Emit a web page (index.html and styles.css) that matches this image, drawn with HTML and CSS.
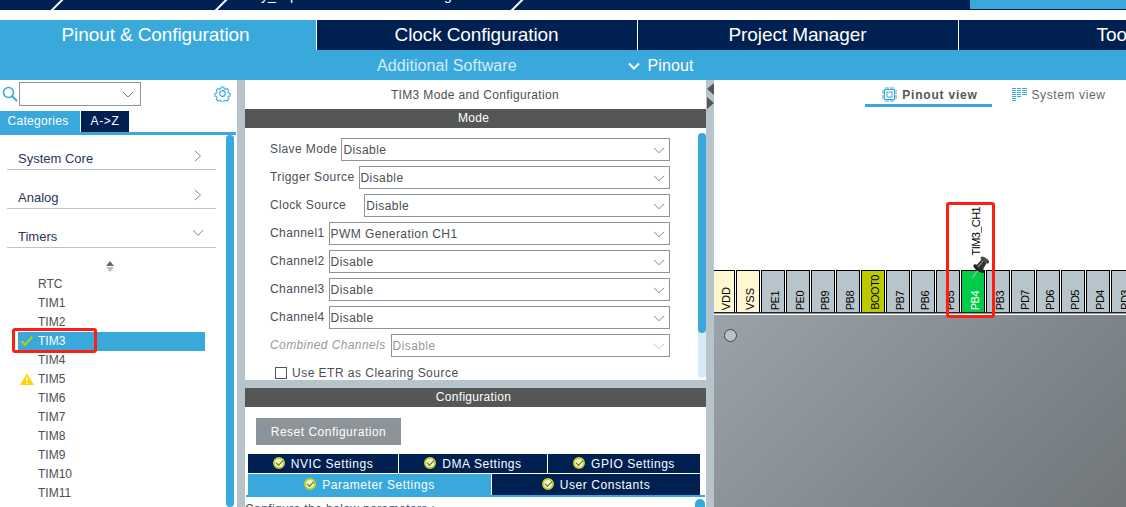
FILE: index.html
```html
<!DOCTYPE html>
<html lang="en">

<head>
    <meta charset="UTF-8" />
    <title>TIM3 Pinout</title>
    <link rel="stylesheet" href="styles.css">
</head>

<body>
    <div class="crumbs">
        <i class="crumb-cut"></i>
        <i class="crumb-cut"></i>
        <i class="crumb-cut"></i>
        <span class="crumb-text name">y_</span>
        <span class="crumb-text ext">p</span>
        <span class="crumb-text tail">g</span>
        <span class="crumb-end"></span>
    </div>

    <div class="main-tabs">
        <div class="main-tab active">Pinout &amp; Configuration</div>
        <div class="main-tab">Clock Configuration</div>
        <div class="main-tab">Project Manager</div>
        <div class="main-tab">Tools</div>
    </div>
    <div class="sub-bar">
        <span class="sub-item dim">Additional Software</span>
        <span class="sub-item">
            <svg width="12" height="8" viewBox="0 0 12 8"><path d="M1 1.500l5 5 5-5" fill="none" stroke="#fff" stroke-width="2"/></svg>
            Pinout
        </span>
    </div>

    <div class="workspace">
        <aside class="side">
            <div class="search-row">
                <svg width="16" height="16" viewBox="0 0 16 16"><circle cx="6.500" cy="6.500" r="5" fill="none" stroke="#39a9dc" stroke-width="1.600"/><path d="M10 10l5 5" stroke="#39a9dc" stroke-width="1.800"/></svg>
                <div class="combo">
                    <svg width="12" height="7" viewBox="0 0 12 7"><path d="M1 1l5 5 5-5" fill="none" stroke="#777" stroke-width="1"/></svg>
                </div>
                <svg class="gear" width="17" height="17" viewBox="0 0 17 17"><path d="M7 1h3l.4 2 1.500.7 1.800-1.100 2 2.100-1.100 1.700.6 1.500 2 .5v3l-2 .4-.6 1.500 1.100 1.800-2 2-1.800-1.100-1.500.6-.4 2H7l-.4-2-1.500-.6-1.800 1.100-2-2 1.100-1.800-.7-1.500-2-.4v-3l2-.5.7-1.500-1.100-1.700 2-2.100 1.800 1.100 1.500-.7z" transform="translate(1.100 1.100) scale(.87)" fill="none" stroke="#39a9dc" stroke-width="1.200"/><circle cx="8.500" cy="8.500" r="2.800" fill="none" stroke="#39a9dc" stroke-width="1.200"/></svg>
            </div>
            <div class="side-tabs">
                <div class="side-tab active">Categories</div>
                <div class="side-tab">A-&gt;Z</div>
            </div>
            <div class="side-body">
                <div class="side-tree">
                    <div class="group">System Core
                        <svg width="8" height="12" viewBox="0 0 8 12"><path d="M1 1l5.500 5-5.500 5" fill="none" stroke="#888"/></svg>
                    </div>
                    <div class="group">Analog
                        <svg width="8" height="12" viewBox="0 0 8 12"><path d="M1 1l5.500 5-5.500 5" fill="none" stroke="#888"/></svg>
                    </div>
                    <div class="group">Timers
                        <svg class="open" width="12" height="8" viewBox="0 0 12 8"><path d="M1 1l5 5.500 5-5.500" fill="none" stroke="#888"/></svg>
                    </div>
                    <div class="sort"><i class="sort-up"></i><i class="sort-down"></i></div>
                    <ul class="timer-list">
                        <li>RTC</li>
                        <li>TIM1</li>
                        <li>TIM2</li>
                        <li class="selected">
                            <svg class="mark" width="14" height="12" viewBox="0 0 14 12"><path d="M1.500 6l3.500 4 7.500-8.500" fill="none" stroke="#b5cc18" stroke-width="2"/></svg>
                            TIM3
                            <span class="red-box list-box"></span>
                        </li>
                        <li>TIM4</li>
                        <li>
                            <svg class="mark" width="14" height="12" viewBox="0 0 14 12"><path d="M7 .5L14 12H0z" fill="#ffd200"/><path d="M7 4v4.500M7 9.500v1.500" stroke="#fff" stroke-width="1.400"/></svg>
                            TIM5
                        </li>
                        <li>TIM6</li>
                        <li>TIM7</li>
                        <li>TIM8</li>
                        <li>TIM9</li>
                        <li>TIM10</li>
                        <li>TIM11</li>
                    </ul>
                </div>
                <div class="scroll side-scroll"><div class="thumb full"></div></div>
            </div>
        </aside>

        <section class="center">
            <div class="panel mode-panel">
                <div class="panel-title">TIM3 Mode and Configuration</div>
                <div class="band">Mode</div>
                <div class="mode-body">
                    <div class="form">
                        <div class="row"><label>Slave Mode</label><div class="select">Disable<svg width="12" height="7" viewBox="0 0 14 8"><path d="M1 1l6 5.500L13 1" fill="none" stroke="#777"/></svg></div></div>
                        <div class="row"><label>Trigger Source</label><div class="select">Disable<svg width="12" height="7" viewBox="0 0 14 8"><path d="M1 1l6 5.500L13 1" fill="none" stroke="#777"/></svg></div></div>
                        <div class="row"><label class="wide">Clock Source</label><div class="select">Disable<svg width="12" height="7" viewBox="0 0 14 8"><path d="M1 1l6 5.500L13 1" fill="none" stroke="#777"/></svg></div></div>
                        <div class="row"><label>Channel1</label><div class="select">PWM Generation CH1<svg width="12" height="7" viewBox="0 0 14 8"><path d="M1 1l6 5.500L13 1" fill="none" stroke="#777"/></svg></div></div>
                        <div class="row"><label>Channel2</label><div class="select">Disable<svg width="12" height="7" viewBox="0 0 14 8"><path d="M1 1l6 5.500L13 1" fill="none" stroke="#777"/></svg></div></div>
                        <div class="row"><label>Channel3</label><div class="select">Disable<svg width="12" height="7" viewBox="0 0 14 8"><path d="M1 1l6 5.500L13 1" fill="none" stroke="#777"/></svg></div></div>
                        <div class="row"><label>Channel4</label><div class="select">Disable<svg width="12" height="7" viewBox="0 0 14 8"><path d="M1 1l6 5.500L13 1" fill="none" stroke="#777"/></svg></div></div>
                        <div class="row off"><label>Combined Channels</label><div class="select">Disable<svg width="12" height="7" viewBox="0 0 14 8"><path d="M1 1l6 5.500L13 1" fill="none" stroke="#bbb"/></svg></div></div>
                        <div class="check-row"><i class="check"></i>Use ETR as Clearing Source</div>
                    </div>
                    <div class="scroll mode-scroll"><div class="thumb"></div></div>
                </div>
            </div>
            <div class="panel config-panel">
                <div class="band">Configuration</div>
                <button class="reset">Reset Configuration</button>
                <div class="cfg-tabs">
                    <div class="cfg-row">
                        <div class="cfg-tab nvic"><i class="ok"></i>NVIC Settings</div>
                        <div class="cfg-tab dma"><i class="ok"></i>DMA Settings</div>
                        <div class="cfg-tab gpio"><i class="ok"></i>GPIO Settings</div>
                    </div>
                    <div class="cfg-row tall">
                        <div class="cfg-tab param active"><i class="ok"></i>Parameter Settings</div>
                        <div class="cfg-tab user"><i class="ok"></i>User Constants</div>
                    </div>
                </div>
                <div class="cfg-line"></div>
                <div class="cfg-body">
                    <span class="cfg-note">Configure the below parameters :</span>
                    <div class="cfg-scroll"></div>
                </div>
            </div>
        </section>

        <div class="splitter"><i class="arrow-left"></i><i class="arrow-right"></i></div>

        <section class="pinout">
            <div class="view-tabs">
                <div class="view-tab active">
                    <svg width="15" height="15" viewBox="0 0 15 15"><rect x="2.500" y="2.500" width="10" height="10" fill="none" stroke="#39a9dc"/><rect x="5" y="5" width="5" height="5" fill="none" stroke="#39a9dc"/><path d="M4 0v2M6 0v2M9 0v2M11 0v2M4 13v2M6 13v2M9 13v2M11 13v2M0 4h2M0 6h2M0 9h2M0 11h2M13 4h2M13 6h2M13 9h2M13 11h2" stroke="#39a9dc"/></svg>
                    Pinout view
                </div>
                <div class="view-tab">
                    <svg width="15" height="14" viewBox="0 0 15 14"><path d="M0 .5h4M5 .5h4M10 .5h5M0 2.500h4M5 2.500h4M10 2.500h5M0 4.500h4M5 4.500h4M10 4.500h5M0 6.500h4M5 6.500h4M10 6.500h5M0 8.500h4M5 8.500h4M0 10.500h4M0 12.500h4" stroke="#39a9dc"/></svg>
                    System view
                </div>
            </div>
            <div class="pin-area">
                <div class="pins">
                    <div class="pin power vdd"><span>VDD</span></div>
                    <div class="pin power"><span>VSS</span></div>
                    <div class="pin"><span>PE1</span></div>
                    <div class="pin"><span>PE0</span></div>
                    <div class="pin"><span>PB9</span></div>
                    <div class="pin"><span>PB8</span></div>
                    <div class="pin boot"><span>BOOT0</span></div>
                    <div class="pin"><span>PB7</span></div>
                    <div class="pin"><span>PB6</span></div>
                    <div class="pin"><span>PB5</span></div>
                    <div class="pin used">
                        <span>PB4</span>
                        <b class="signal">TIM3_CH1</b>
                        <svg class="push" width="18" height="24" viewBox="0 0 18 24">
                            <g transform="rotate(35 9 12)">
                                <path d="M9 14v11" stroke="#a9b1b5" stroke-width="1.200"/>
                                <ellipse cx="9" cy="14" rx="6.500" ry="2.500" fill="#222"/>
                                <path d="M6 4h6l1 10H5z" fill="#333"/>
                                <path d="M8 5l-.6 8" stroke="#999" stroke-width="1"/>
                                <ellipse cx="9" cy="3.500" rx="5" ry="2.200" fill="#4a4a4a"/>
                            </g>
                        </svg>
                    </div>
                    <div class="pin"><span>PB3</span></div>
                    <div class="pin"><span>PD7</span></div>
                    <div class="pin"><span>PD6</span></div>
                    <div class="pin"><span>PD5</span></div>
                    <div class="pin"><span>PD4</span></div>
                    <div class="pin"><span>PD3</span></div>
                </div>
                <span class="red-box pin-box"></span>
            </div>
            <div class="chip"><i class="dot"></i></div>
        </section>
    </div>
</body>

</html>
```
FILE: styles.css
```css
* {
    box-sizing: border-box;
}

html,
body {
    height: 100%;
    margin: 0;
    padding: 0;
    overflow: hidden;
    background-color: white;
    font-family: "Liberation Sans", Arial, sans-serif;
    font-size: 12px;
    color: #4b4f55;
}

/* top strip */
.crumbs {
    position: relative;
    height: 10px;
    background-color: #002052;
    display: flex;
    overflow: hidden;
    padding-left: 56px;
}
.crumb-cut {
    width: 1.5px;
    height: 16px;
    background-color: white;
    transform: rotate(45deg);
    margin-top: -3px;
    margin-right: 162px;
}
.crumb-cut:nth-child(2) {
    margin-right: 295px;
}
.crumb-text {
    position: absolute;
    top: -12px;
    color: white;
    font-size: 14px;
    line-height: 14px;
}
.crumb-text.name { left: 261px; }
.crumb-text.ext { left: 290px; }
.crumb-text.tail { left: 444px; }
.crumb-end {
    margin-left: auto;
    margin-right: -1px;
    width: 157px;
    height: 9px;
    background-color: #39a9dc;
}

.main-tabs {
    margin-top: 10px;
    height: 30px;
    display: flex;
    background-color: #002052;
    overflow: hidden;
}
.main-tab {
    flex: 0 0 321px;
    border-right: 1px solid white;
    color: white;
    font-size: 19px;
    letter-spacing: -.1px;
    line-height: 30px;
    text-align: center;
    padding-right: 1px;
}
.main-tab.active {
    flex-basis: 317px;
    background-color: #39a9dc;
    padding-right: 5px;
}
.sub-bar {
    height: 30px;
    background-color: #39a9dc;
    color: white;
    font-size: 16px;
    line-height: 31px;
    letter-spacing: .1px;
    padding-left: 377px;
    display: flex;
}
.sub-item svg {
    margin-right: 3px;
    vertical-align: 1px;
}
.sub-item.dim {
    color: #d4ecf8;
    width: 251px;
}

.workspace {
    height: 427px;
    display: flex;
    background-color: #b8c4cb;
}

/* left panel */
.side {
    width: 237px;
    background-color: white;
    display: flex;
    flex-direction: column;
}
.search-row {
    display: flex;
    height: 31px;
    padding: 2px 0 0 2px;
}
.search-row > svg {
    margin-top: 4px;
}
.search-row > svg.gear {
    margin-top: 3px;
}
.combo {
    width: 122px;
    height: 24px;
    margin-left: 1px;
    border: 1px solid #8e959a;
    display: flex;
    align-items: center;
    justify-content: flex-end;
    padding-right: 6px;
}
.gear {
    margin-left: 73px;
}
.side-tabs {
    display: flex;
    gap: 1px;
    height: 24px;
    border-bottom: 3px solid #39a9dc;
    margin-right: 1px;
}
.side-tab {
    height: 21px;
    line-height: 21px;
    text-align: center;
    width: 48px;
    color: white;
    background-color: #002052;
    letter-spacing: .7px;
}
.side-tab.active {
    width: 80px;
    background-color: #39a9dc;
    letter-spacing: .3px;
    padding-right: 4px;
}
.side-body {
    flex: 1;
    display: flex;
    min-height: 0;
}
.side-tree {
    width: 226px;
    padding: 0 10px 0 7px;
}
.group {
    height: 39px;
    border-bottom: 1px solid #b8c4cb;
    color: #2c3560;
    padding: 20px 14px 0 11px;
    font-size: 13px;
    line-height: 16px;
    display: flex;
    justify-content: space-between;
}
.group:first-child {
    height: 35px;
    padding-top: 16px;
}
.group svg {
    margin-top: -1px;
}
.group svg.open {
    margin-top: 0;
    margin-right: -2px;
}
.sort {
    height: 27px;
    padding-top: 13px;
    display: flex;
    flex-direction: column;
    align-items: center;
    gap: 1px;
    padding-right: 3px;
}
.sort-up {
    border: 4px solid transparent;
    border-top: 0;
    border-bottom: 5px solid #666;
}
.sort-down {
    border: 4px solid transparent;
    border-bottom: 0;
    border-top: 5px solid #bbb;
}
.timer-list {
    list-style: none;
    margin: 0 0 0 11px;
    padding: 0 0 0 20px;
    width: 187px;
}
.timer-list li {
    height: 19px;
    line-height: 19px;
    margin-left: -20px;
    padding-left: 20px;
    position: relative;
}
.timer-list li.selected {
    background-color: #39a9dc;
    color: white;
}
.mark {
    position: absolute;
    left: 2px;
    top: 3px;
}
.scroll {
    background-color: #d8e8f5;
    border-radius: 4px;
}
.side-scroll {
    width: 8px;
    height: 372px;
}
.thumb {
    background-color: #39a9dc;
    border-radius: 4px;
    height: 200px;
}
.thumb.full {
    height: 100%;
}

/* center panels */
.center {
    margin-left: 8px;
    width: 461px;
    display: flex;
    flex-direction: column;
    gap: 8px;
}
.panel {
    background-color: white;
}
.panel-title {
    height: 29px;
    line-height: 30px;
    text-align: center;
    letter-spacing: .35px;
    padding-right: 1px;
}
.band {
    height: 19px;
    line-height: 19px;
    text-align: center;
    color: white;
    background-color: #555756;
    letter-spacing: .3px;
    padding-right: 4px;
}
.mode-body {
    height: 252px;
    display: flex;
    padding-top: 5px;
}
.form {
    width: 453px;
    padding: 5px 0 0 25px;
}
.row {
    height: 28px;
    display: flex;
    padding-right: 28px;
}
.row label {
    line-height: 23px;
    margin-right: 4px;
    letter-spacing: .4px;
}
.row label.wide {
    margin-right: 18px;
}
.select {
    flex: 1;
    height: 23px;
    border: 1px solid #8e959a;
    padding: 1px 4px 0 1px;
    display: flex;
    justify-content: space-between;
    align-items: center;
    letter-spacing: .42px;
}
.row.off label {
    font-style: italic;
    color: #999;
    margin-right: 5px;
}
.row.off .select {
    color: #999;
}
.check-row {
    display: flex;
    align-items: center;
    gap: 5px;
    padding-left: 5px;
    letter-spacing: .48px;
    line-height: 14px;
    margin-top: 4px;
}
.check {
    width: 12px;
    height: 12px;
    border: 1px solid #555;
}
.mode-scroll {
    width: 8px;
    height: 245px;
}
.config-panel {
    flex: 1;
    overflow: hidden;
}
.reset {
    display: block;
    margin: 11px 0 9px 11px;
    width: 145px;
    height: 27px;
    border: 0;
    background-color: #8c9399;
    color: white;
    font: 12px "Liberation Sans", Arial, sans-serif;
    letter-spacing: .5px;
}
.cfg-tabs {
    margin-left: 3px;
    width: 452px;
}
.cfg-row {
    display: flex;
    gap: 1px;
    height: 20px;
}
.cfg-row.tall {
    height: 21px;
}
.cfg-tab {
    background-color: #002052;
    color: white;
    display: flex;
    align-items: center;
    justify-content: center;
    gap: 6px;
    letter-spacing: .55px;
    height: 19px;
}
.cfg-row.tall .cfg-tab {
    height: 21px;
}
.cfg-tab.nvic { width: 150px; }
.cfg-tab.dma { width: 148px; }
.cfg-tab.gpio { width: 152px; }
.cfg-tab.param { width: 243px; }
.cfg-tab.user { width: 208px; }
.cfg-tab.active {
    background-color: #39a9dc;
}
.ok {
    width: 12px;
    height: 12px;
    border-radius: 50%;
    border: 2px solid #c8d02a;
    background-color: #f4f6cf;
    position: relative;
    margin-top: -2px;
}
.ok::after {
    content: "";
    position: absolute;
    left: 1px;
    top: 1px;
    width: 6px;
    height: 3px;
    border-left: 1.500px solid #5a6a20;
    border-bottom: 1.500px solid #5a6a20;
    transform: rotate(-45deg);
}
.cfg-line {
    height: 2px;
    margin: 0 1px;
    background-color: #39a9dc;
}
.cfg-body {
    display: flex;
    justify-content: space-between;
    padding: 2px 1px 0 0;
    line-height: 14px;
    white-space: nowrap;
}
.cfg-note {
    margin-top: 3px;
    letter-spacing: .4px;
}
.cfg-scroll {
    width: 10px;
    height: 20px;
    background-color: #39a9dc;
    border-radius: 5px;
}

/* splitter */
.splitter {
    width: 8px;
    padding: 3px 0 0 1px;
    display: flex;
    flex-direction: column;
    gap: 2px;
}
.arrow-left {
    width: 0;
    border: 6px solid transparent;
    border-left: 0;
    border-right: 7px solid #555756;
}
.arrow-right {
    width: 0;
    border: 6px solid transparent;
    border-right: 0;
    border-left: 7px solid #555756;
}

/* pinout view */
.pinout {
    flex: 1;
    min-width: 0;
    background-color: white;
    display: flex;
    flex-direction: column;
    overflow: hidden;
}
.view-tabs {
    display: flex;
    padding: 5px 0 0 151px;
    height: 27px;
}
.view-tab {
    flex: 0 0 127px;
    height: 22px;
    display: flex;
    justify-content: center;
    align-items: center;
    gap: 5px;
    letter-spacing: .6px;
    margin-right: 3px;
    color: #666;
    padding-bottom: 3px;
}
.view-tab.active {
    border-bottom: 3px solid #39a9dc;
    color: #55585b;
    font-weight: bold;
    letter-spacing: .8px;
    padding: 0 0 0 3px;
}
.pin-area {
    position: relative;
    padding-top: 163px;
}
.pins {
    display: flex;
    gap: 1px;
    height: 45px;
    border-bottom: 1px solid white;
    background: linear-gradient(white 42px, #222 42px, #222 43px, #8e959a 43px);
}
.pin {
    flex: 0 0 24px;
    height: 42px;
    border: 1px solid black;
    border-bottom: 0;
    background-color: #b8c4cb;
    color: black;
    position: relative;
    display: flex;
    justify-content: center;
    align-items: flex-end;
    padding: 0 0 2px 4px;
}
.pin.vdd {
    flex-basis: 21px;
    border-left: 0;
}
.pin span {
    writing-mode: vertical-rl;
    transform: rotate(180deg);
    font-size: 11px;
    letter-spacing: -.5px;
    line-height: 12px;
}
.pin.power span {
    letter-spacing: 0;
}
.pin.power {
    background-color: #fff6d2;
}
.pin.boot {
    background-color: #bccb00;
}
.pin.used {
    background-color: #00cc47;
    color: white;
}
.signal {
    position: absolute;
    left: 8px;
    bottom: 57px;
    writing-mode: vertical-rl;
    transform: rotate(180deg);
    color: black;
    font-weight: normal;
    font-size: 11px;
    letter-spacing: -.6px;
    line-height: 12px;
}
.push {
    position: absolute;
    left: 9px;
    top: -16px;
}
.red-box {
    position: absolute;
    border: 3px solid #ff1e14;
    border-radius: 3px;
}
.list-box {
    left: -6px;
    top: -4px;
    width: 85px;
    height: 25px;
}
.pin-box {
    left: 232px;
    top: 95px;
    width: 49px;
    height: 116px;
}
.chip {
    flex: 1;
    padding: 14px 0 0 10px;
    background: linear-gradient(135deg, #9aa3a9, #70767a);
}
.dot {
    display: block;
    width: 13px;
    height: 13px;
    border-radius: 50%;
    border: 1px solid #444;
    background-color: #b8c4cb;
}
```
